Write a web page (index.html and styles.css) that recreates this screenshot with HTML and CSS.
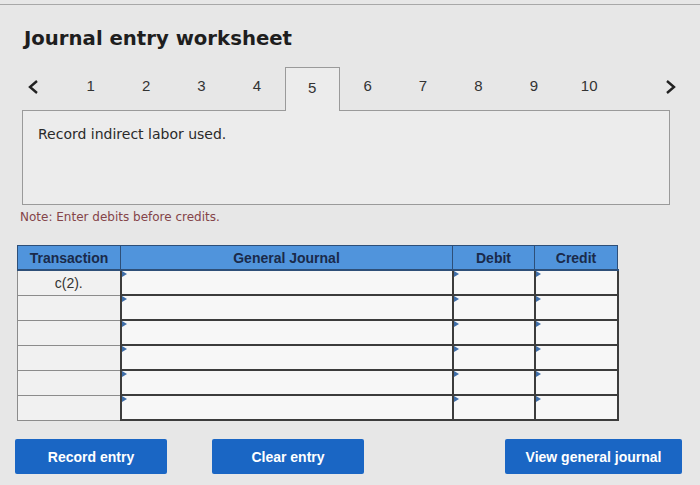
FILE: index.html
```html
<!DOCTYPE html>
<html>
<head>
    <title>Journal entry worksheet</title>
    <link rel="stylesheet" href="styles.css">
</head>
<body>
    <div class="topline"></div>

    <h1 class="title">Journal entry worksheet</h1>

    <div class="tabs">
        <span class="arrow">
            <svg width="14" height="16" viewBox="0 0 14 16"><polyline points="11,2 4,8 11,14" fill="none" stroke="#222" stroke-width="2.4"/></svg>
        </span>
        <span class="tab">1</span>
        <span class="tab">2</span>
        <span class="tab">3</span>
        <span class="tab">4</span>
        <span class="tab active">5</span>
        <span class="tab">6</span>
        <span class="tab">7</span>
        <span class="tab">8</span>
        <span class="tab">9</span>
        <span class="tab">10</span>
        <span class="arrow right">
            <svg width="14" height="16" viewBox="0 0 14 16"><polyline points="3,2 10,8 3,14" fill="none" stroke="#222" stroke-width="2.4"/></svg>
        </span>
    </div>

    <div class="question">Record indirect labor used.</div>

    <div class="note">Note: Enter debits before credits.</div>

    <table class="journal">
        <thead>
            <tr>
                <th class="col-trans">Transaction</th>
                <th class="col-acct">General Journal</th>
                <th class="col-debit">Debit</th>
                <th class="col-credit">Credit</th>
            </tr>
        </thead>
        <tbody>
            <tr>
                <td class="trans">c(2).</td>
                <td class="input"></td><td class="input"></td><td class="input"></td>
            </tr>
            <tr>
                <td class="trans"></td>
                <td class="input"></td><td class="input"></td><td class="input"></td>
            </tr>
            <tr>
                <td class="trans"></td>
                <td class="input"></td><td class="input"></td><td class="input"></td>
            </tr>
            <tr>
                <td class="trans"></td>
                <td class="input"></td><td class="input"></td><td class="input"></td>
            </tr>
            <tr>
                <td class="trans"></td>
                <td class="input"></td><td class="input"></td><td class="input"></td>
            </tr>
            <tr>
                <td class="trans"></td>
                <td class="input"></td><td class="input"></td><td class="input"></td>
            </tr>
        </tbody>
    </table>

    <div class="actions">
        <button class="btn">Record entry</button>
        <button class="btn">Clear entry</button>
        <span class="spacer"></span>
        <button class="btn wide">View general journal</button>
    </div>
</body>
</html>
```

FILE: styles.css
```css
body {
    margin: 0;
    padding: 0;
    background: #e7e7e7;
    font-family: "DejaVu Sans", Verdana, sans-serif;
    color: #222;
    width: 700px;
    height: 485px;
    overflow: hidden;
}

.topline {
    margin-top: 4px;
    border-top: 1px solid #a8a8a8;
}

.title {
    margin: 22px 0 0 24px;
    font-size: 19.7px;
    line-height: 24px;
    font-weight: bold;
    color: #1e1e1e;
}

.tabs {
    display: flex;
    align-items: stretch;
    height: 43px;
    margin-top: 16px;
    padding-left: 22px;
    font-family: "Liberation Sans", Arial, sans-serif;
    font-size: 15px;
    color: #333;
}

.arrow {
    width: 41px;
    display: flex;
    align-items: center;
    padding: 0 0 3px 4px;
    box-sizing: border-box;
}

.arrow.right {
    margin-left: auto;
    margin-right: 20px;
    width: 20px;
}

.tab {
    width: 55.4px;
    display: flex;
    align-items: center;
    justify-content: center;
    padding-bottom: 6px;
    box-sizing: border-box;
}

.tab.active {
    border: 1px solid #9a9a9a;
    border-bottom: none;
    background: #ececec;
    position: relative;
    z-index: 1;
    margin-bottom: -1px;
    padding-bottom: 4px;
}

.question {
    margin: 0 30px 0 22px;
    height: 95px;
    box-sizing: border-box;
    border: 1px solid #9a9a9a;
    background: #ececec;
    padding: 14px 15px;
    font-size: 14px;
    line-height: 18px;
    color: #2a2a2a;
}

.note {
    margin: 4px 0 0 20px;
    font-size: 12px;
    line-height: 16px;
    color: #844449;
}

.journal {
    margin: 20px 0 0 17px;
    border-collapse: collapse;
    table-layout: fixed;
    font-family: "Liberation Sans", Arial, sans-serif;
}

.journal th {
    height: 23px;
    padding: 0;
    background: #5094dc;
    color: #1a2a4a;
    font-size: 14px;
    font-weight: bold;
    border: 1px solid #2e4f78;
    border-bottom: 2px solid #2e4f78;
}

.col-trans { width: 102px; }
.col-acct { width: 331px; }
.col-debit { width: 81px; }
.col-credit { width: 82px; }

.journal td {
    height: 23px;
    padding: 0;
}

.trans {
    background: #f1f1f1;
    border: 1px solid #8c8c8c;
    text-align: center;
    font-size: 14px;
    color: #333;
}

.input {
    background: #f7f7f7;
    border: 2px solid #3c3c3c;
    position: relative;
}

.input::before {
    content: "";
    position: absolute;
    top: 0;
    left: 0;
    border-top: 3px solid transparent;
    border-bottom: 3px solid transparent;
    border-left: 5px solid #3f6ea8;
}

.actions {
    display: flex;
    margin: 18px 18px 0 15px;
    gap: 45px;
}

.spacer {
    flex: 1;
}

.btn {
    width: 152px;
    height: 35px;
    background: #1a66c4;
    color: #fff;
    border: none;
    border-radius: 2px;
    font-family: "Liberation Sans", Arial, sans-serif;
    font-size: 14px;
    font-weight: bold;
    cursor: pointer;
}

.btn.wide {
    width: 177px;
}
```
